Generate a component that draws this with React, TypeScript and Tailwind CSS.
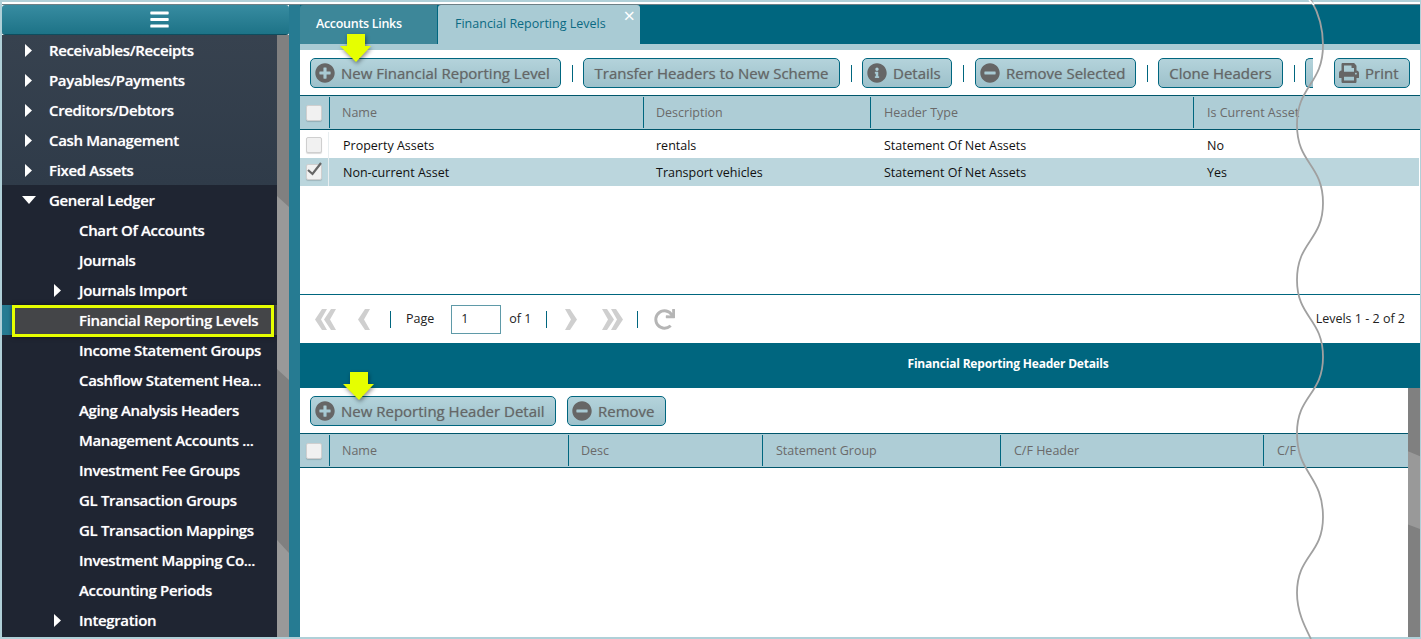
import React from 'react';
import {
  FaPlusCircle,
  FaMinusCircle,
  FaInfoCircle,
  FaPrint,
  FaBars,
  FaRedo,
} from 'react-icons/fa';

type NavItem = { label: string; caret?: 'right' | 'down'; level: 1 | 2; selected?: boolean };

const topNav: NavItem[] = [
  { label: 'Receivables/Receipts', caret: 'right', level: 1 },
  { label: 'Payables/Payments', caret: 'right', level: 1 },
  { label: 'Creditors/Debtors', caret: 'right', level: 1 },
  { label: 'Cash Management', caret: 'right', level: 1 },
  { label: 'Fixed Assets', caret: 'right', level: 1 },
];

const subNav: NavItem[] = [
  { label: 'General Ledger', caret: 'down', level: 1 },
  { label: 'Chart Of Accounts', level: 2 },
  { label: 'Journals', level: 2 },
  { label: 'Journals Import', caret: 'right', level: 2 },
  { label: 'Financial Reporting Levels', level: 2, selected: true },
  { label: 'Income Statement Groups', level: 2 },
  { label: 'Cashflow Statement Hea...', level: 2 },
  { label: 'Aging Analysis Headers', level: 2 },
  { label: 'Management Accounts ...', level: 2 },
  { label: 'Investment Fee Groups', level: 2 },
  { label: 'GL Transaction Groups', level: 2 },
  { label: 'GL Transaction Mappings', level: 2 },
  { label: 'Investment Mapping Co...', level: 2 },
  { label: 'Accounting Periods', level: 2 },
  { label: 'Integration', caret: 'right', level: 2 },
];

function Caret({ dir }: { dir: 'right' | 'down' }) {
  return dir === 'right' ? (
    <svg width="9" height="13" viewBox="0 0 9 13" className="shrink-0">
      <polygon points="1,0 8,6.5 1,13" fill="#ffffff" />
    </svg>
  ) : (
    <svg width="14" height="8" viewBox="0 0 14 8" className="shrink-0 ml-[-2px]">
      <polygon points="0,0 14,0 7,8" fill="#ffffff" />
    </svg>
  );
}

function NavRow({ item }: { item: NavItem }) {
  const text =
    'text-[15px] font-semibold tracking-[-0.35px] text-white whitespace-nowrap [text-shadow:0_0_1px_rgba(255,255,255,0.55)]';
  if (item.selected) {
    return (
      <div className="h-[30px] flex relative">
        <div className="w-[10px] bg-[#267b92]" />
        <div className="flex-1 bg-[#444548] pl-[67px] flex items-center">
          <span className={text}>{item.label}</span>
        </div>
        <div className="absolute left-[10px] top-0 w-[262px] h-[32px] border-[3px] border-[#e6ff00] shadow-[0_0_4px_rgba(0,0,0,0.6)]" />
      </div>
    );
  }
  const l1 = item.level === 1;
  return (
    <div className="h-[30px] flex items-center">
      <div className={l1 ? 'w-[47px] flex justify-start pl-[22px]' : 'w-[77px] flex justify-start pl-[51px]'}>
        {item.caret ? <Caret dir={item.caret} /> : null}
      </div>
      <span className={text}>{item.label}</span>
    </div>
  );
}

function Scroll({ polys }: { polys: string[] }) {
  return (
    <svg className="w-[12px] h-full shrink-0 bg-[#808080]" width="12" height="100%" preserveAspectRatio="none" viewBox="0 0 12 602">
      {polys.map((p) => (
        <polygon key={p} points={p} fill="#999999" />
      ))}
    </svg>
  );
}

function Btn({ icon, label, w }: { icon?: React.ReactNode; label: string; w: string }) {
  return (
    <div
      className={`${w} h-[30px] shrink-0 rounded-[5px] border border-[#00667f] bg-gradient-to-b from-[#b4d3db] to-[#9dc1cb] flex items-center gap-[6px] text-[15px] text-[#666] whitespace-nowrap [text-shadow:0_0_1px_rgba(0,0,0,0.3)] ${
        icon ? 'justify-start pl-[4px]' : 'justify-center'
      }`}
    >
      {icon}
      <span>{label}</span>
    </div>
  );
}

const Sep = () => <div className="w-px h-[17px] bg-[#00667f] shrink-0" />;

function Chevron({ dir, double }: { dir: 'left' | 'right'; double?: boolean }) {
  const flip = dir === 'right' ? 'scale-x-[-1]' : '';
  return (
    <svg width={double ? 21 : 12} height="21" viewBox={double ? '0 0 21 21' : '0 0 12 21'} className={`shrink-0 ${flip}`}>
      <polygon points="7,0 12,0 6,10.5 12,21 7,21 0,10.5" fill="#cfcfcf" />
      {double ? <polygon points="16,0 21,0 15,10.5 21,21 16,21 9,10.5" fill="#cfcfcf" /> : null}
    </svg>
  );
}

function Check({ checked }: { checked?: boolean }) {
  return (
    <div className="relative w-[16px] h-[16px] rounded-[2px] border border-[#cfcfcf] bg-[#f1f1f1] shadow-[0_1px_1px_rgba(0,0,0,0.15)]">
      {checked ? (
        <svg width="18" height="16" viewBox="0 0 18 16" className="absolute left-[-1px] top-[-5px]">
          <path d="M2 10 L6.5 14 L15 3" fill="none" stroke="#666" strokeWidth="2.2" />
        </svg>
      ) : null}
    </div>
  );
}

function HeaderRow({ cols, template }: { cols: string[]; template: string }) {
  return (
    <div className={`${template} grid h-[35px] shrink-0 bg-[#aecdd6] border-y border-[#00566c] text-[12.5px] text-[#6a6a6a]`}>
      <div className="flex items-center pl-[6px]">
        <Check />
      </div>
      {cols.map((c, i) => (
        <div
          key={c}
          className={`border-l border-[#00667f] my-[1px] flex items-center pt-[2px] whitespace-nowrap overflow-hidden ${
            i < 2 ? 'pl-[12px]' : 'pl-[13px]'
          }`}
        >
          {c}
        </div>
      ))}
    </div>
  );
}

function Row({ cells, checked, template, bg, h }: { cells: string[]; checked?: boolean; template: string; bg: string; h: string }) {
  return (
    <div className={`${template} ${bg} ${h} grid text-[12.5px] text-[#111]`}>
      <div className="flex items-center pl-[6px] border-r border-[#e8eef0]">
        <Check checked={checked} />
      </div>
      {cells.map((c, i) => (
        <div key={c} className={`flex items-center pt-[3px] whitespace-nowrap ${i === 1 ? 'pl-[13px]' : 'pl-[14px]'}`}>
          {c}
        </div>
      ))}
    </div>
  );
}

function Arrow({ className }: { className: string }) {
  return (
    <svg width="36" height="32" viewBox="0 0 36 32" className={`absolute ${className} drop-shadow-[1px_2px_2px_rgba(0,0,0,0.45)]`}>
      <polygon points="9,1 27,1 27,13 33,13 18,29 2,13 9,13" fill="#e6ff00" />
    </svg>
  );
}

const topGrid = 'grid-cols-[29px_314px_227px_323px_1fr]';
const botGrid = 'grid-cols-[29px_239px_194px_238px_263px_1fr]';

const icon20 = 'text-[#666] shrink-0';

export default function App() {
  return (
    <div
      className="relative w-[1421px] h-[639px] overflow-hidden bg-[#b0d0d8] pl-[2px] pr-[1px] pb-[2px] pt-[2px]"
      style={{ fontFamily: '"Open Sans", "Noto Sans", sans-serif' }}
    >
      <div className="h-[635px] flex flex-col bg-white pt-[2px]">
        <div className="flex h-[633px] border-t border-[#6d7f85]">
          {/* sidebar */}
          <div className="w-[287px] shrink-0 flex flex-col">
            <div className="h-[30px] shrink-0 rounded-[3px] bg-gradient-to-b from-[#378ca1] to-[#1d7387] border-b border-[#0e4d5e] flex items-center justify-center pl-[28px]">
              <FaBars className="text-white" size={21} />
            </div>
            <div className="flex-1 flex min-h-0">
              <div className="w-[275px] flex flex-col">
                <div className="bg-gradient-to-b from-[#37424f] to-[#2f3b49]">
                  {topNav.map((n) => (
                    <NavRow key={n.label} item={n} />
                  ))}
                </div>
                <div className="flex-1 bg-[#1f2532]">
                  {subNav.map((n) => (
                    <NavRow key={n.label} item={n} />
                  ))}
                </div>
              </div>
              <Scroll polys={['0,161 12,172 12,345 0,334', '0,505 12,518 12,602 0,602']} />
            </div>
          </div>
          <div className="w-[11px] shrink-0 bg-[#267b92]" />

          {/* main */}
          <div className="flex-1 min-w-0 flex flex-col">
            {/* tabs */}
            <div className="h-[39px] shrink-0 bg-[#00667f] flex">
              <div className="w-[137px] rounded-tl-[3px] bg-[#3d8799] flex items-center pl-[16px] text-[12.5px] font-semibold tracking-[-0.3px] text-white">
                Accounts Links
              </div>
              <div className="relative w-[202px] ml-[1px] rounded-t-[3px] bg-[#a9cbd4] flex items-center pl-[17px] text-[12.5px] text-[#0b6a83]">
                Financial Reporting Levels
                <span className="absolute right-[5px] top-[1px] text-[20px] leading-[20px] text-white">×</span>
              </div>
            </div>
            <div className="h-[6px] shrink-0 bg-[#a9cbd4]" />

            {/* toolbar */}
            <div className="relative h-[45px] shrink-0 flex items-start pt-[8px] pl-[10px]">
              <Btn w="w-[251px]" label="New Financial Reporting Level" icon={<FaPlusCircle size={20} className={icon20} />} />
              <div className="w-[22px] h-[30px] flex items-center justify-center"><Sep /></div>
              <Btn w="w-[257px]" label="Transfer Headers to New Scheme" />
              <div className="w-[22px] h-[30px] flex items-center justify-center"><Sep /></div>
              <Btn w="w-[90px]" label="Details" icon={<FaInfoCircle size={20} className={icon20} />} />
              <div className="w-[23px] h-[30px] flex items-center justify-center"><Sep /></div>
              <Btn w="w-[161px]" label="Remove Selected" icon={<FaMinusCircle size={20} className={icon20} />} />
              <div className="w-[22px] h-[30px] flex items-center justify-center"><Sep /></div>
              <Btn w="w-[125px]" label="Clone Headers" />
              <div className="w-[22px] h-[30px] flex items-center justify-center"><Sep /></div>
              <div className="w-[8px] h-[30px] rounded-l-[5px] border-y border-l border-[#00667f] bg-gradient-to-b from-[#b4d3db] to-[#9dc1cb]" />
              <div className="w-[21px]" />
              <Btn w="w-[76px]" label="Print" icon={<FaPrint size={20} className={icon20} />} />
              <Arrow className="left-[38px] top-[-17px]" />
            </div>

            {/* grid 1 */}
            <HeaderRow template={topGrid} cols={['Name', 'Description', 'Header Type', 'Is Current Asset']} />
            <div className="h-[164px] shrink-0 pt-[2px] pr-[1px]">
              <Row h="h-[26px]" template={topGrid} bg="bg-white" cells={['Property Assets', 'rentals', 'Statement Of Net Assets', 'No']} />
              <Row h="h-[28px]" template={topGrid} bg="bg-[#bbd6dd]" checked cells={['Non-current Asset', 'Transport vehicles', 'Statement Of Net Assets', 'Yes']} />
            </div>

            {/* pager */}
            <div className="h-[49px] shrink-0 border-t border-[#00667f] flex items-center pl-[15px] pr-[15px] text-[12.5px] text-[#222]">
              <Chevron dir="left" double />
              <div className="ml-[22px]"><Chevron dir="left" /></div>
              <div className="ml-[20px]"><Sep /></div>
              <span className="ml-[15px]">Page</span>
              <div className="ml-[17px] w-[50px] h-[29px] border border-[#5f9aa8] flex items-center pl-[9px]">1</div>
              <span className="ml-[8px]">of 1</span>
              <div className="ml-[15px]"><Sep /></div>
              <div className="ml-[18px]"><Chevron dir="right" /></div>
              <div className="ml-[25px]"><Chevron dir="right" double /></div>
              <div className="ml-[14px]"><Sep /></div>
              <FaRedo size={21} className="text-[#b5b5b5] ml-[16px]" />
              <span className="ml-auto">Levels 1 - 2 of 2</span>
            </div>

            {/* band */}
            <div className="h-[45px] shrink-0 bg-[#00667f] flex items-center justify-center pl-[296px] pb-[3px] text-[12px] font-bold tracking-[-0.2px] text-white">
              Financial Reporting Header Details
            </div>

            {/* lower */}
            <div className="flex-1 flex min-h-0">
              <div className="flex-1 min-w-0 flex flex-col">
                <div className="relative h-[45px] shrink-0 flex items-start pt-[8px] pl-[10px] gap-[11px]">
                  <Btn w="w-[246px]" label="New Reporting Header Detail" icon={<FaPlusCircle size={20} className={icon20} />} />
                  <Btn w="w-[99px]" label="Remove" icon={<FaMinusCircle size={20} className={icon20} />} />
                  <Arrow className="left-[41px] top-[-17px]" />
                </div>
                <HeaderRow template={botGrid} cols={['Name', 'Desc', 'Statement Group', 'C/F Header', 'C/F']} />
              </div>
              <Scroll polys={['0,153 12,165 12,341 0,330']} />
            </div>
          </div>
        </div>
      </div>

      {/* torn-edge marker */}
      <svg className="absolute left-0 top-0 pointer-events-none" width="1421" height="639" viewBox="0 0 1421 639">
        <path
          d="M1311 0 C1318 12 1323 28 1323 45 C1323 85 1297 85 1297 125 C1297 164 1323 164 1323 203 C1323 241 1297 241 1297 280 C1297 318 1323 318 1323 357 C1323 395 1297 395 1297 433 C1297 475 1323 475 1323 517 C1323 555 1297 555 1297 593 C1297 612 1305 627 1311 639"
          fill="none"
          stroke="#a0a0a0"
          strokeWidth="1.8"
        />
        <path d="M1309 0 L1314 5" stroke="#ffffff" strokeWidth="1.5" />
      </svg>
    </div>
  );
}
